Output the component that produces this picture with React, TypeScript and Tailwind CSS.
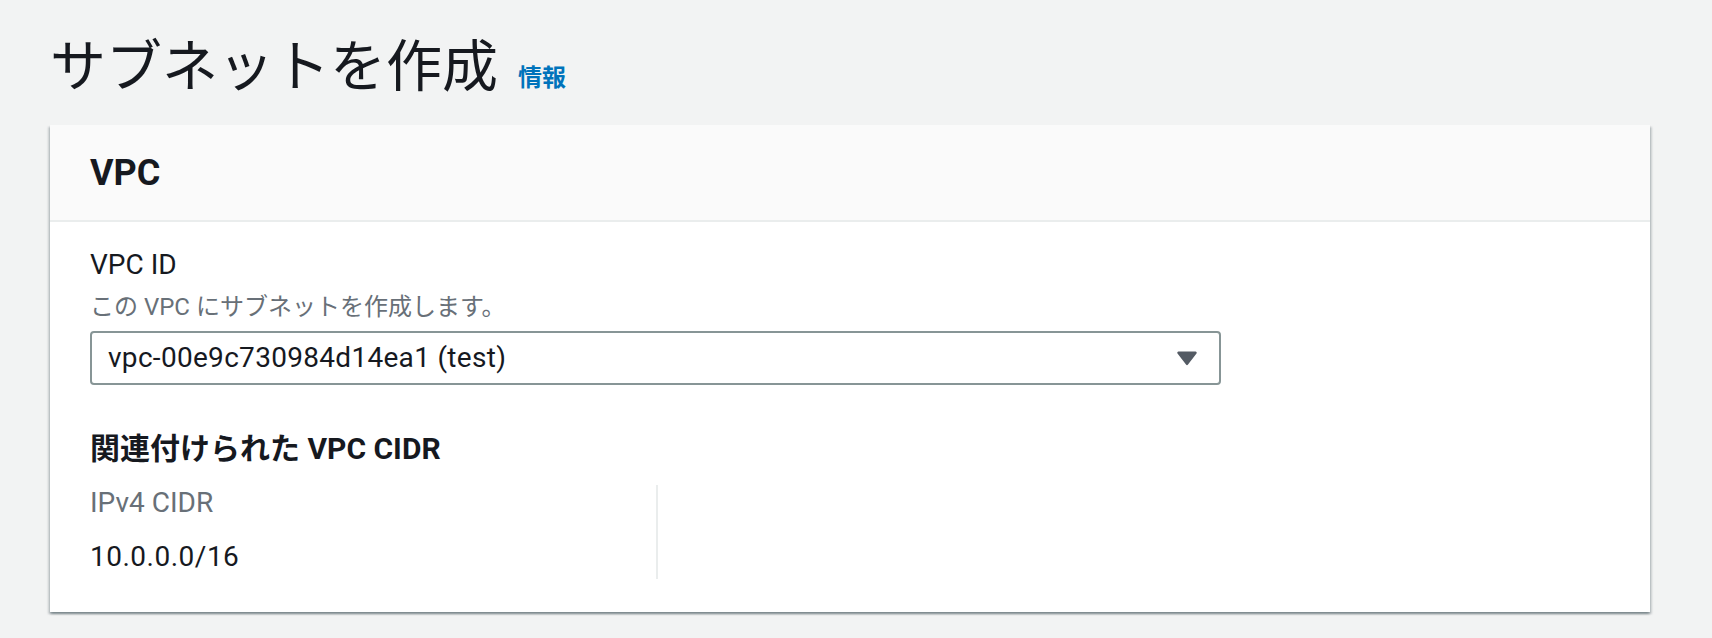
const FONT = "font-['Roboto','Noto_Sans_CJK_JP',sans-serif]";

function CaretDown() {
  return (
    <svg width="22" height="16" viewBox="0 0 22 16" aria-hidden="true">
      <path
        d="M2.5 1.5h17a1.2 1.2 0 0 1 1 1.9l-8.5 11.2a1.2 1.2 0 0 1-2 0L1.5 3.4a1.2 1.2 0 0 1 1-1.9z"
        fill="#545b64"
      />
    </svg>
  );
}

export default function App() {
  return (
    <div className={`${FONT} min-h-[638px] w-full bg-[#f2f3f3] text-[#16191f]`}>
      {/* page title */}
      <div className="flex items-baseline pl-[50px] pt-[35px]">
        <h1 className="text-[56px] font-normal leading-[64px] text-[#16191f]">サブネットを作成</h1>
        <a className="ml-[20px] text-[24px] font-bold leading-[32px] text-[#0073bb]">情報</a>
      </div>

      {/* VPC container */}
      <div className="ml-[50px] mt-[26px] w-[1600px] bg-white shadow-[0_2px_2px_0_rgba(0,28,36,0.3),2px_2px_2px_0_rgba(0,28,36,0.15),-2px_2px_2px_0_rgba(0,28,36,0.15)]">
        <div className="flex h-[97px] items-center border-b-2 border-[#eaeded] bg-[#fafafa] px-[40px]">
          <h2 className="text-[36px] font-bold leading-[44px]">VPC</h2>
        </div>

        <div className="px-[40px] pb-[33px] pt-[23px]">
          <div className="text-[28px] leading-[40px]">VPC ID</div>
          <div className="mt-[6px] text-[24px] leading-[32px] text-[#687078]">
            この VPC にサブネットを作成します。
          </div>

          <div className="mt-[8px] flex h-[54px] w-[1131px] items-center justify-between rounded-[4px] border-2 border-[#879596] bg-white pl-[16px] pr-[21px]">
            <span className="text-[28px] leading-[36px] tracking-[0.3px]">vpc-00e9c730984d14ea1 (test)</span>
            <CaretDown />
          </div>

          <h3 className="mt-[44px] text-[30px] font-bold leading-[40px]">関連付けられた VPC CIDR</h3>

          <div className="mt-[16px] flex">
            <div className="w-[568px] border-r-2 border-[#eaeded] pb-[4px]">
              <div className="text-[28px] leading-[36px] text-[#687078]">IPv4 CIDR</div>
              <div className="mt-[18px] text-[28px] leading-[36px] tracking-[0.5px]">10.0.0.0/16</div>
            </div>
          </div>
        </div>
      </div>
    </div>
  );
}
